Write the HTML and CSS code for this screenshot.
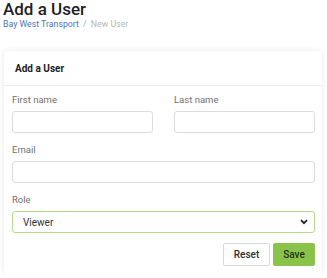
FILE: index.html
```html
<!DOCTYPE html>
<html lang="en">
<head>
  <meta charset="UTF-8" />
  <meta name="viewport" content="width=device-width, initial-scale=1.0"/>
  <title>Add a User</title>
  <link rel="stylesheet" href="styles.css">
</head>
<body>
  <h1>Add a User</h1>
  <div class="breadcrumb">
    <a href="#">Bay West Transport</a>
    <span class="sep">/</span>
    <span class="current">New User</span>
  </div>

  <div class="card">
    <div class="card-header">Add a User</div>
    <form class="card-body">
      <div class="row">
        <div class="field">
          <label for="first">First name</label>
          <input type="text" id="first" />
        </div>
        <div class="field">
          <label for="last">Last name</label>
          <input type="text" id="last" />
        </div>
      </div>

      <div class="field">
        <label for="email">Email</label>
        <input type="email" id="email" />
      </div>

      <div class="field">
        <label for="role">Role</label>
        <div class="select-wrap">
          <select id="role">
            <option>Viewer</option>
            <option>Editor</option>
            <option>Admin</option>
          </select>
          <svg class="chevron" width="8" height="6" viewBox="0 0 8 6">
            <path d="M1 1.2 L4 4.2 L7 1.2" fill="none" stroke="#222" stroke-width="1.8"/>
          </svg>
        </div>
      </div>

      <div class="actions">
        <button type="reset" class="btn btn-reset">Reset</button>
        <button type="button" class="btn btn-save">Save</button>
      </div>
    </form>
  </div>
</body>
</html>
```

FILE: styles.css
```css
* {
  box-sizing: border-box;
  font-family: Roboto, 'Liberation Sans', sans-serif;
}

body {
  margin: 0;
  padding: 0 5px 0 2px;
  background: #fff;
  color: #333;
}

h1 {
  margin: -1px 0 -1px 1px;
  font-size: 17px;
  line-height: 20px;
  font-weight: 500;
  color: #1d2125;
}

.breadcrumb {
  font-size: 8.75px;
  line-height: 13px;
  margin-left: 1px;
}

.breadcrumb a {
  color: #4a78b8;
  text-decoration: none;
}

.breadcrumb .sep {
  color: #aaa;
  margin: 0 2px;
}

.breadcrumb .current {
  color: #b8b8b8;
}

.card {
  margin: 20px 0 0 2px;
  background: #fff;
  border-radius: 3px;
  box-shadow: 0 0 6px rgba(0, 0, 0, 0.09);
}

.card-header {
  height: 35px;
  padding: 0 11px;
  display: flex;
  align-items: center;
  font-size: 10px;
  font-weight: 700;
  color: #222;
  border-bottom: 1px solid #ececec;
}

.card-body {
  padding: 7px 7px 8px 8px;
}

.row {
  display: grid;
  grid-template-columns: 1fr 1fr;
  column-gap: 21px;
}

.field {
  margin-bottom: 10px;
}

.field label {
  display: block;
  font-size: 9.5px;
  line-height: 14px;
  color: #707070;
  margin-bottom: 4px;
}

.field input,
.field select {
  display: block;
  width: 100%;
  height: 22px;
  border: 1px solid #dcdcdc;
  border-radius: 3px;
  background: #fff;
  font-size: 10px;
  color: #333;
  padding: 0 10px;
  outline: none;
}

.select-wrap {
  position: relative;
}

.field select {
  appearance: none;
  border-color: #b3d98c;
}

.chevron {
  position: absolute;
  right: 7px;
  top: 8px;
}

.actions {
  display: flex;
  justify-content: flex-end;
  gap: 3px;
  margin-top: 1px;
}

.btn {
  height: 23px;
  border-radius: 2px;
  font-size: 10px;
  font-weight: 500;
  color: #2a2f33;
  cursor: pointer;
}

.btn-reset {
  width: 47px;
  background: #fff;
  border: 1px solid #d9d9d9;
}

.btn-save {
  width: 42px;
  background: #8bc34a;
  border: 1px solid #8bc34a;
  color: #25331a;
}
```
